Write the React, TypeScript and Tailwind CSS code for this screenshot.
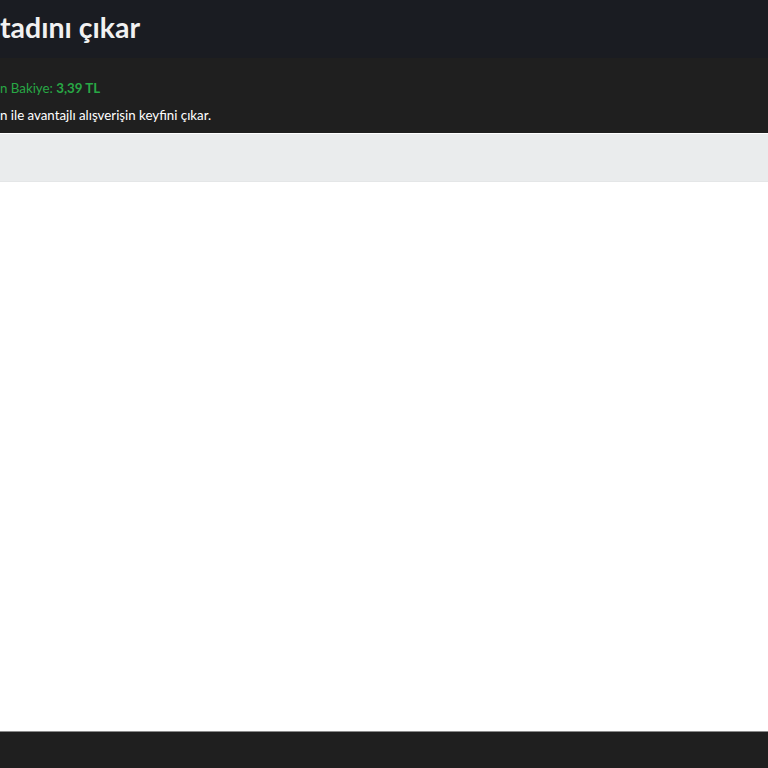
export default function App() {
  return (
    <div className="flex h-[768px] w-[768px] flex-col overflow-hidden bg-white" style={{ fontFamily: "Lato, 'Open Sans', sans-serif" }}>
      <header className="flex h-[58px] shrink-0 items-center bg-[#1a1c22] pb-[4px]">
        <h1 className="whitespace-nowrap text-[28.5px] font-bold leading-none text-[#f1f1f1]">tadını çıkar</h1>
      </header>
      <section className="flex h-[75px] shrink-0 flex-col justify-end gap-[11px] bg-[#1f1f1f] pb-[10px] text-[13.3px] leading-[16px]">
        <p className="whitespace-nowrap text-[#28a745]">
          n Bakiye: <span className="font-bold">3,39 TL</span>
        </p>
        <p className="whitespace-nowrap text-white">n ile avantajlı alışverişin keyfini çıkar.</p>
      </section>
      <div className="h-[49px] shrink-0 border-t-[1px] border-b-[1px] border-t-white border-b-[#e4e6e7] bg-[#eaeced]" />
      <main className="flex-1 bg-white" />
      <footer className="h-[37px] shrink-0 border-t-[1px] border-[#8a8a8a] bg-[#1f1f1f]" />
    </div>
  );
}
